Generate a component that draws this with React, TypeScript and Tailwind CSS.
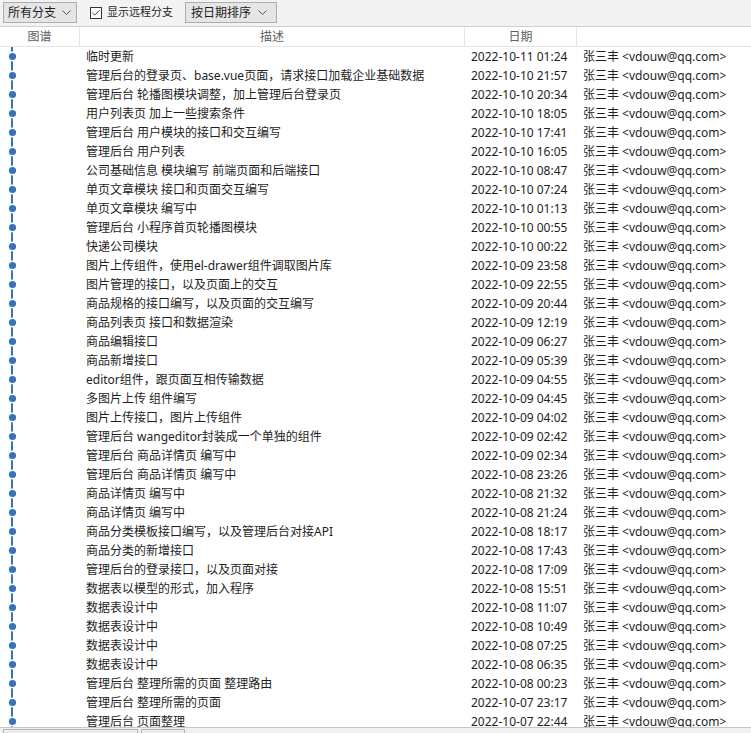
import { Check } from 'lucide-react'

interface Commit {
  msg: string
  date: string
}

const commits: Commit[] = [
  { msg: '临时更新', date: '2022-10-11 01:24' },
  { msg: '管理后台的登录页、base.vue页面，请求接口加载企业基础数据', date: '2022-10-10 21:57' },
  { msg: '管理后台 轮播图模块调整，加上管理后台登录页', date: '2022-10-10 20:34' },
  { msg: '用户列表页 加上一些搜索条件', date: '2022-10-10 18:05' },
  { msg: '管理后台 用户模块的接口和交互编写', date: '2022-10-10 17:41' },
  { msg: '管理后台 用户列表', date: '2022-10-10 16:05' },
  { msg: '公司基础信息 模块编写 前端页面和后端接口', date: '2022-10-10 08:47' },
  { msg: '单页文章模块 接口和页面交互编写', date: '2022-10-10 07:24' },
  { msg: '单页文章模块 编写中', date: '2022-10-10 01:13' },
  { msg: '管理后台 小程序首页轮播图模块', date: '2022-10-10 00:55' },
  { msg: '快递公司模块', date: '2022-10-10 00:22' },
  { msg: '图片上传组件，使用el-drawer组件调取图片库', date: '2022-10-09 23:58' },
  { msg: '图片管理的接口，以及页面上的交互', date: '2022-10-09 22:55' },
  { msg: '商品规格的接口编写，以及页面的交互编写', date: '2022-10-09 20:44' },
  { msg: '商品列表页 接口和数据渲染', date: '2022-10-09 12:19' },
  { msg: '商品编辑接口', date: '2022-10-09 06:27' },
  { msg: '商品新增接口', date: '2022-10-09 05:39' },
  { msg: 'editor组件，跟页面互相传输数据', date: '2022-10-09 04:55' },
  { msg: '多图片上传 组件编写', date: '2022-10-09 04:45' },
  { msg: '图片上传接口，图片上传组件', date: '2022-10-09 04:02' },
  { msg: '管理后台 wangeditor封装成一个单独的组件', date: '2022-10-09 02:42' },
  { msg: '管理后台 商品详情页 编写中', date: '2022-10-09 02:34' },
  { msg: '管理后台 商品详情页 编写中', date: '2022-10-08 23:26' },
  { msg: '商品详情页 编写中', date: '2022-10-08 21:32' },
  { msg: '商品详情页 编写中', date: '2022-10-08 21:24' },
  { msg: '商品分类模板接口编写，以及管理后台对接API', date: '2022-10-08 18:17' },
  { msg: '商品分类的新增接口', date: '2022-10-08 17:43' },
  { msg: '管理后台的登录接口，以及页面对接', date: '2022-10-08 17:09' },
  { msg: '数据表以模型的形式，加入程序', date: '2022-10-08 15:51' },
  { msg: '数据表设计中', date: '2022-10-08 11:07' },
  { msg: '数据表设计中', date: '2022-10-08 10:49' },
  { msg: '数据表设计中', date: '2022-10-08 07:25' },
  { msg: '数据表设计中', date: '2022-10-08 06:35' },
  { msg: '管理后台 整理所需的页面 整理路由', date: '2022-10-08 00:23' },
  { msg: '管理后台 整理所需的页面', date: '2022-10-07 23:17' },
  { msg: '管理后台 页面整理', date: '2022-10-07 22:44' },
]

const font = 'font-["Noto_Sans","Noto_Sans_CJK_SC",sans-serif]'

function Chevron() {
  return (
    <svg width="9" height="5" viewBox="0 0 9 5" className="block">
      <polyline points="0.5,0.5 4.5,4.5 8.5,0.5" fill="none" stroke="#555" strokeWidth="1" />
    </svg>
  )
}

function GraphCell() {
  return (
    <svg width="80" height="19" viewBox="0 0 80 19" className="block">
      <line x1="12" y1="0" x2="12" y2="19" stroke="#3a72b8" strokeWidth="2" />
      <circle cx="12.5" cy="9.5" r="5" fill="#ffffff" />
      <circle cx="12.5" cy="9.5" r="3.6" fill="#3a72b8" />
    </svg>
  )
}

export default function App() {
  return (
    <div className={`h-[733px] w-[751px] overflow-hidden bg-white text-[12px] text-[#1e1e1e] flex flex-col ${font}`}>
      {/* toolbar */}
      <div className="h-[27px] shrink-0 bg-[#f3f3f3] border-b border-[#cfcfcf] flex items-center pl-[3px] pb-[1px]">
        <button className="h-[21px] w-[74px] border border-[#adadad] bg-[#e5e5e5] flex items-center justify-between pl-[4px] pr-[5px] leading-none">
          <span>所有分支</span>
          <Chevron />
        </button>
        <label className="ml-[13px] flex items-center gap-[5px]">
          <span className="w-[12px] h-[12px] border border-[#333] bg-white flex items-center justify-center">
            <Check size={10} strokeWidth={2} className="text-[#222]" />
          </span>
          <span className="text-[11px]">显示远程分支</span>
        </label>
        <button className="ml-[12px] h-[21px] w-[92px] border border-[#adadad] bg-[#e5e5e5] flex items-center justify-between pl-[5px] pr-[9px] leading-none">
          <span>按日期排序</span>
          <Chevron />
        </button>
      </div>

      {/* header */}
      <div className="h-[20px] shrink-0 grid grid-cols-[80px_385px_112px_1fr] border-b border-[#e5e5e5] text-[#606060]">
        <div className="border-r border-[#e5e5e5] flex items-center justify-center">图谱</div>
        <div className="border-r border-[#e5e5e5] flex items-center justify-center">描述</div>
        <div className="border-r border-[#e5e5e5] flex items-center justify-center">日期</div>
        <div />
      </div>

      {/* rows */}
      <div className="flex-1 overflow-hidden">
        {commits.map((c, i) => (
          <div key={i} className="h-[19px] grid grid-cols-[80px_385px_112px_1fr] items-center whitespace-nowrap">
            <GraphCell />
            <div className="pl-[6px] overflow-hidden">{c.msg}</div>
            <div className="pl-[6px]">{c.date}</div>
            <div className="pl-[6px]">张三丰 &lt;vdouw@qq.com&gt;</div>
          </div>
        ))}
      </div>

      {/* bottom bar */}
      <div className="h-[6px] shrink-0 bg-[#f0f0f0] border-t border-[#c8c8c8] flex items-end pl-[3px] gap-[3px]">
        <div className="h-[4px] w-[135px] border border-b-0 border-[#b5b5b5] bg-[#ececec]" />
        <div className="h-[4px] w-[44px] border border-b-0 border-[#b5b5b5] bg-[#ececec]" />
      </div>
    </div>
  )
}
